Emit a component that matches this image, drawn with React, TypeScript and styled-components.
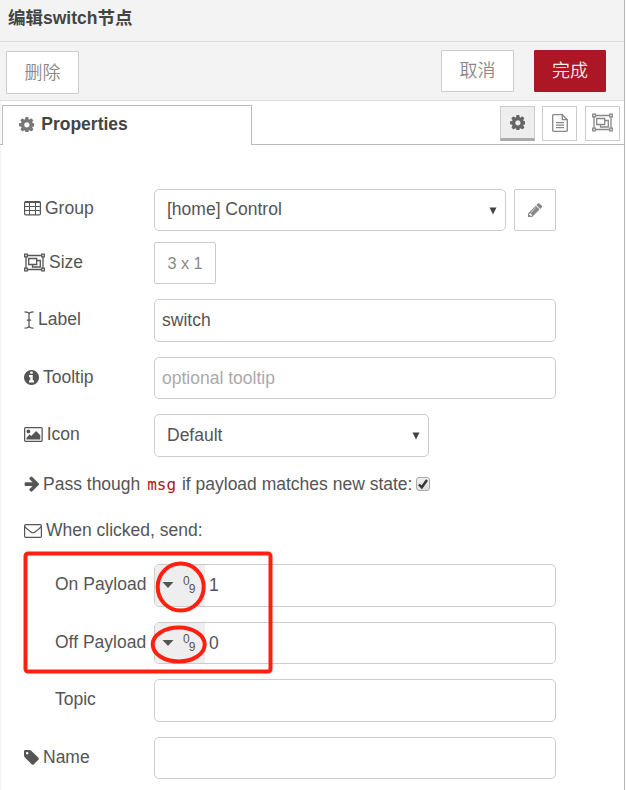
import React from 'react';
import styled, { createGlobalStyle } from 'styled-components';

const GlobalStyle = createGlobalStyle`
  * { box-sizing: border-box; }
  html, body { margin: 0; padding: 0; background: #f8f8f8; }
  body { overflow: hidden; }
`;

const Panel = styled.div`
  position: relative;
  width: 625px;
  height: 790px;
  overflow: hidden;
  background: #fff;
  border-right: 1px solid #bbb;
  box-shadow: inset 2px 0 1px -1px #f2f2f2;
  color: #555;
  font: 17.5px/25px "Liberation Sans", Arial, "Noto Sans CJK SC", sans-serif;
`;

const Header = styled.header`
  height: 42px;
  padding: 6px 8px 0;
  background: #f3f3f3;
  border-bottom: 1px solid #ddd;
  color: #444;
  font-weight: bold;
`;

const Toolbar = styled.div`
  display: flex;
  align-items: flex-start;
  height: 59px;
  padding: 8px 18px 0 6px;
  background: #f3f3f3;
  border-bottom: 1px solid #ddd;
`;

const ToolButton = styled.button<{ $primary?: boolean; $push?: boolean; $drop?: number }>`
  width: ${(p) => (p.$primary ? 72 : 73)}px;
  height: ${(p) => (p.$push ? 43 : 42)}px;
  padding: 0 0 4px;
  margin: ${(p) => p.$drop || 0}px ${(p) => (p.$push ? 'auto' : '0')} 0 ${(p) => (p.$primary ? '20px' : '0')};
  border: 1px solid ${(p) => (p.$primary ? '#ad1625' : '#ccc')};
  background: ${(p) => (p.$primary ? '#ad1625' : '#fff')};
  color: ${(p) => (p.$primary ? '#eee' : '#888')};
  border-radius: 1px;
  font: 350 18px/24px "Noto Sans CJK SC", sans-serif;
`;

const TabBar = styled.div`
  display: flex;
  height: 44px;
  padding-left: 2px;
  box-shadow: inset 0 -1px 0 #bbb;
`;

const Tab = styled.div`
  display: flex;
  align-items: center;
  gap: 7px;
  width: 250px;
  height: 40px;
  margin-top: 4px;
  padding: 0 15.5px 2px;
  border: 1px solid #bbb;
  border-bottom: 0;
  background: #fff;
  color: #444;
  font-weight: bold;
  svg { color: #777; }
`;

const TabTools = styled.div`
  display: flex;
  gap: 7px;
  margin: 5px 4px 0 auto;
`;

const TabTool = styled.button<{ $active?: boolean }>`
  display: flex;
  align-items: center;
  justify-content: center;
  width: 35px;
  height: 35px;
  padding: 0 0 ${(p) => (p.$active ? 0 : 2)}px;
  border: 1px solid #ccc;
  border-bottom: ${(p) => (p.$active ? '3px solid #aaa' : '1px solid #ccc')};
  background: ${(p) => (p.$active ? '#eee' : '#fff')};
  color: ${(p) => (p.$active ? '#666' : '#888')};
  &:last-child { margin-left: 1px; }
`;

const Form = styled.form`
  display: flex;
  flex-direction: column;
  padding: 44px 0 0 24px;
`;

const Row = styled.div<{ $height?: number; $gap?: number }>`
  display: flex;
  align-items: stretch;
  height: ${(p) => p.$height || 42}px;
  margin-bottom: ${(p) => p.$gap ?? 15}px;
`;

const Label = styled.label<{ $indent?: boolean; $lift?: number }>`
  display: flex;
  align-items: center;
  gap: 4px;
  width: 130px;
  padding: 0 0 ${(p) => p.$lift ?? 2}px ${(p) => (p.$indent ? 31 : 0)}px;
  white-space: nowrap;
`;

const Field = styled.div<{ $width?: number; $select?: boolean; $muted?: boolean }>`
  display: flex;
  align-items: center;
  width: ${(p) => p.$width || 402}px;
  padding: ${(p) => (p.$muted ? '1px 8px 0' : '0 8px 1px')} ${(p) => (p.$select ? 12 : 7)}px;
  padding-left: ${(p) => (p.$select ? 12 : 7)}px;
  padding-right: 8px;
  border: 1px solid #ccc;
  border-radius: 5px;
  background: #fff;
  color: ${(p) => (p.$muted ? '#aaa' : '#555')};
  svg { margin: 2px 0 0 auto; }
`;

const TypedField = styled(Field)`
  padding: 0;
`;

const TypeMenu = styled.span`
  display: flex;
  align-items: center;
  align-self: stretch;
  width: 50px;
  margin-right: 4px;
  padding-left: 7px;
  border-radius: 4px 0 0 4px;
  background: #eee;
  svg { margin: 0 9px 1px 0; }
`;

const Digits = styled.span`
  display: flex;
  font-size: 12px;
  line-height: 14px;
  span:first-child { margin-top: -8px; }
  span:last-child { margin: 0 0 -7px -1px; }
`;

const SquareButton = styled.button<{ $width: number; $left?: number }>`
  display: flex;
  align-items: center;
  justify-content: center;
  width: ${(p) => p.$width}px;
  margin-left: ${(p) => p.$left || 0}px;
  padding: 0;
  border: 1px solid #ccc;
  border-radius: 2px;
  background: #fff;
  color: #888;
  font: 16.25px/24px "Liberation Sans", Arial, sans-serif;
`;

const TextLine = styled.div<{ $gap: number }>`
  display: flex;
  align-items: center;
  gap: 4px;
  height: 25px;
  margin-bottom: ${(p) => p.$gap}px;
  white-space: pre;
`;

const Code = styled.code`
  padding: 0 1px 0 2px;
  color: #ad1625;
  font: 16px "DejaVu Sans Mono", monospace;
`;

const Check = styled.span`
  display: flex;
  width: 14px;
  height: 14px;
  margin-bottom: 1px;
  border: 1px solid #aaa;
  border-radius: 3px;
  background: linear-gradient(#eee, #ddd);
`;

const Annotations = styled.svg`
  position: absolute;
  left: 0;
  top: 0;
  pointer-events: none;
`;

const EM = 17.5 / 1792;

type GlyphProps = { d: string; x?: number; y?: number; w: number; h: number; scale?: number };

function Glyph({ d, x = 0, y = 0, w, h, scale = 1 }: GlyphProps) {
  return (
    <svg width={w * EM * scale} height={h * EM * scale} viewBox={`${x} ${y} ${w} ${h}`} fill="currentColor" fillRule="evenodd">
      <path d={d} />
    </svg>
  );
}

const COG =
  'M1152 896q0-106-75-181t-181-75-181 75-75 181 75 181 181 75 181-75 75-181zm512-109v222q0 12-8 23t-20 13l-185 28q-19 54-39 91 35 50 107 138 10 12 10 25t-9 23q-27 37-99 108t-94 71q-12 0-26-9l-138-108q-44 23-91 38-16 136-29 186-7 28-36 28h-222q-14 0-24.5-8.5t-11.5-21.5l-28-184q-49-16-90-37l-141 107q-10 9-25 9-14 0-25-11-126-114-165-168-7-10-7-23 0-12 8-23 15-21 51-66.5t54-70.5q-27-50-41-99l-183-27q-13-2-21-12.5t-8-23.5v-222q0-12 8-23t19-13l186-28q14-46 39-92-40-57-107-138-10-12-10-24 0-10 9-23 26-36 98.500-107.500t94.500-71.500q13 0 26 10l138 107q44-23 91-38 16-136 29-186 7-28 36-28h222q14 0 24.500 8.500t11.500 21.500l28 184q49 16 90 37l142-107q9-9 24-9 13 0 25 10 129 119 165 170 7 8 7 22 0 12-8 23-15 21-51 66.500t-54 70.500q26 50 41 98l183 28q13 2 21 12.500t8 23.500z';
const INFO =
  'M1152 1376v-160q0-14-9-23t-23-9h-96v-512q0-14-9-23t-23-9h-320q-14 0-23 9t-9 23v160q0 14 9 23t23 9h96v320h-96q-14 0-23 9t-9 23v160q0 14 9 23t23 9h448q14 0 23-9t9-23zm-128-896v-160q0-14-9-23t-23-9h-192q-14 0-23 9t-9 23v160q0 14 9 23t23 9h192q14 0 23-9t9-23zm640 416q0 209-103 385.5t-279.5 279.5-385.5 103-385.5-103-279.5-279.5-103-385.5 103-385.5 279.5-279.5 385.5-103 385.5 103 279.5 279.5 103 385.5z';
const TAG =
  'M576 448q0-53-37.5-90.5t-90.5-37.5-90.5 37.5-37.5 90.5 37.5 90.5 90.5 37.5 90.5-37.5 37.5-90.5zm1067 576q0 53-37 90l-491 492q-39 37-91 37-53 0-90-37l-715-716q-38-37-64.5-101t-26.5-117v-416q0-52 38-90t90-38h416q53 0 117 26.5t102 64.5l715 714q37 39 37 91z';
const ARROW =
  'M1600 960q0 54-37 91l-651 651q-39 37-91 37-51 0-90-37l-75-75q-38-38-38-91t38-91l293-293h-704q-52 0-84.5-37.5t-32.5-90.5v-128q0-53 32.5-90.5t84.5-37.5h704l-293-294q-38-36-38-90t38-90l75-75q38-38 90-38 53 0 91 38l651 651q37 35 37 90z';
const PENCIL =
  'M491 1536l91-91-235-235-91 91v107h128v128h107zm523-928q0-22-22-22-10 0-17 7l-542 542q-7 7-7 17 0 22 22 22 10 0 17-7l542-542q7-7 7-17zm-54-192l416 416-832 832h-416v-416zm683 96q0 53-37 90l-166 166-416-416 166-165q36-38 90-38 53 0 91 38l235 234q37 39 37 91z';
const PICTURE =
  'M576 576q0 80-56 136t-136 56-136-56-56-136 56-136 136-56 136 56 56 136zm1024 384v448h-1408v-192l320-320 160 160 512-512zm96-704h-1600q-13 0-22.5 9.5t-9.5 22.5v1216q0 13 9.5 22.5t22.5 9.5h1600q13 0 22.5-9.5t9.5-22.5v-1216q0-13-9.5-22.5t-22.5-9.5zm160 32v1216q0 66-47 113t-113 47h-1600q-66 0-113-47t-47-113v-1216q0-66 47-113t113-47h1600q66 0 113 47t47 113z';

const Cog = ({ scale }: { scale?: number }) => <Glyph d={COG} x={128} y={128} w={1536} h={1536} scale={scale} />;

const FileIcon = () => (
  <svg width="16" height="18" viewBox="0 0 16 18" fill="none" stroke="currentColor" strokeWidth="1.300">
    <path d="M1.500.7h8.800l5 5v10.800q0 .8-.8.8h-13q-.8 0-.8-.8v-15q0-.8.8-.8z" />
    <path d="M10.300.7v5h5M4 8.600h8M4 11.100h8M4 13.600h8" />
  </svg>
);

const GroupIcon = () => (
  <svg width="21" height="19" viewBox="0 0 21 19" fill="none" stroke="currentColor" strokeWidth="1.300">
    <path d="M3.500 2.500h14M3.500 16.500h14M2 4v11M19 4v11" />
    <path d="M.7 1.200h2.600v2.600H.7zM17.700 1.200h2.600v2.600h-2.600zM.7 15.200h2.600v2.600H.7zM17.700 15.200h2.600v2.600h-2.600z" />
    <path d="M4.700 5.500h8v6h-8zM12.700 7.500h3.600v6.500H8.500v-2.500" />
  </svg>
);

const TableIcon = () => (
  <svg width="17" height="15" viewBox="0 0 17 15" fill="none" stroke="currentColor">
    <rect x=".6" y=".6" width="15.800" height="13.300" rx="1.200" strokeWidth="1.200" />
    <path d="M1 1.500h15" />
    <path d="M5.500 2v12M11.500 2v12M1 5.500h15M1 9.500h15" />
  </svg>
);

const CursorIcon = () => (
  <svg width="10" height="18" viewBox="0 0 10 18" fill="none" stroke="currentColor" strokeWidth="1.250">
    <path d="M.5.8Q5 .8 5 3.200v11.600Q5 17.200.5 17.200M9.500.8Q5 .8 5 3.200M5 14.800q0 2.400 4.500 2.400M2.800 9h4.400" />
  </svg>
);

const EnvelopeIcon = () => (
  <svg width="18" height="14" viewBox="0 0 18 14" fill="none" stroke="currentColor" strokeWidth="1.200">
    <rect x=".6" y=".6" width="16.800" height="12.800" rx="1.200" />
    <path d="M.9 2.500Q1.500 4 7 8q2 1.500 4 0 5.500-4 6.100-5.500" />
  </svg>
);

const SelectArrow = () => (
  <svg width="8" height="8" viewBox="0 0 8 8">
    <path d="M.5.500h7L4 7.500z" fill="#444" />
  </svg>
);

const Caret = () => (
  <svg width="12" height="6" viewBox="0 0 12 6">
    <path d="M.5 0h11L6 6z" fill="#555" />
  </svg>
);

function PayloadInput({ value }: { value: string }) {
  return (
    <TypedField>
      <TypeMenu>
        <Caret />
        <Digits>
          <span>0</span>
          <span>9</span>
        </Digits>
      </TypeMenu>
      {value}
    </TypedField>
  );
}

export default function App() {
  return (
    <>
      <GlobalStyle />
      <Panel>
        <Header>编辑switch节点</Header>
        <Toolbar>
          <ToolButton $push $drop={1}>删除</ToolButton>
          <ToolButton>取消</ToolButton>
          <ToolButton $primary>完成</ToolButton>
        </Toolbar>
        <TabBar>
          <Tab>
            <Cog scale={1.05} />
            Properties
          </Tab>
          <TabTools>
            <TabTool $active><Cog scale={1.05} /></TabTool>
            <TabTool><FileIcon /></TabTool>
            <TabTool><GroupIcon /></TabTool>
          </TabTools>
        </TabBar>
        <Form>
          <Row $gap={11}>
            <Label $lift={4}><TableIcon />Group</Label>
            <Field $select $width={352}>[home] Control<SelectArrow /></Field>
            <SquareButton type="button" $width={42} $left={8}>
              <Glyph d={PENCIL} x={128} y={128} w={1536} h={1536} scale={0.95} />
            </SquareButton>
          </Row>
          <Row>
            <Label><GroupIcon />Size</Label>
            <SquareButton type="button" $width={62}>3 x 1</SquareButton>
          </Row>
          <Row $height={43}>
            <Label><CursorIcon />Label</Label>
            <Field>switch</Field>
          </Row>
          <Row>
            <Label><Glyph d={INFO} x={128} y={128} w={1536} h={1536} />Tooltip</Label>
            <Field $muted>optional tooltip</Field>
          </Row>
          <Row $height={43}>
            <Label><Glyph d={PICTURE} x={-64} y={128} w={1920} h={1536} />Icon</Label>
            <Field $select $width={275}>Default<SelectArrow /></Field>
          </Row>
          <TextLine $gap={21}>
            <Glyph d={ARROW} x={64} y={128} w={1536} h={1664} />
            <span>Pass though <Code>msg</Code> if payload matches new state:</span>
            <Check>
              <svg width="12" height="12" viewBox="0 0 12 12" fill="none" stroke="#333" strokeWidth="2.400">
                <path d="M2 6.500l2.800 2.800L10 2" />
              </svg>
            </Check>
          </TextLine>
          <TextLine $gap={21}>
            <EnvelopeIcon />
            <span>When clicked, send:</span>
          </TextLine>
          <Row $height={43}>
            <Label $indent>On Payload</Label>
            <PayloadInput value="1" />
          </Row>
          <Row>
            <Label $indent>Off Payload</Label>
            <PayloadInput value="0" />
          </Row>
          <Row $height={43}>
            <Label $indent>Topic</Label>
            <Field />
          </Row>
          <Row>
            <Label><Glyph d={TAG} x={128} y={128} w={1536} h={1536} />Name</Label>
            <Field />
          </Row>
        </Form>
        <Annotations width="624" height="790" viewBox="0 0 624 790" fill="none" stroke="#ff2010" strokeWidth="4">
          <rect x="25.500" y="553.500" width="245" height="118" rx="2.500" />
          <ellipse cx="180.700" cy="587" rx="23" ry="23.500" />
          <ellipse cx="178.700" cy="644.500" rx="26" ry="17" />
        </Annotations>
      </Panel>
    </>
  );
}
